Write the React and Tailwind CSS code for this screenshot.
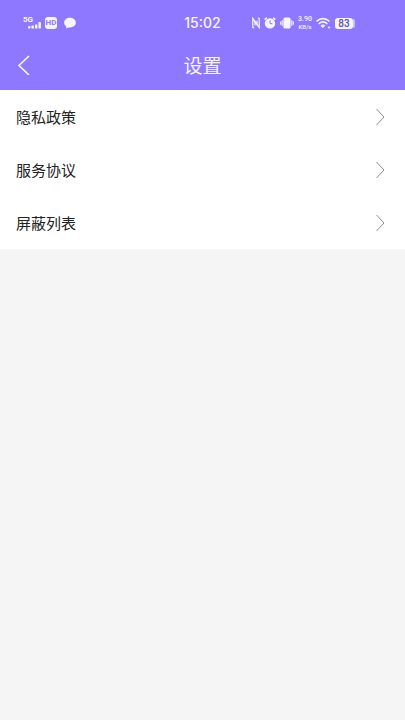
import React from 'react';

const menuItems = [
  { id: 'privacy', label: '隐私政策' },
  { id: 'terms', label: '服务协议' },
  { id: 'blocked', label: '屏蔽列表' },
];

const SignalIcon = () => (
  <div className="relative w-[18px] h-3">
    <span className="absolute left-0 -top-px text-[8px] leading-[8px] font-bold">5G</span>
    <svg className="w-full h-full" viewBox="0 0 18 12" fill="currentColor" aria-hidden="true">
      <rect x="5" y="9" width="2.4" height="2.6" rx="0.4" />
      <rect x="8.5" y="8.4" width="2.4" height="3.2" rx="0.4" />
      <rect x="12" y="7.4" width="2.4" height="4.2" rx="0.4" />
      <rect x="15.5" y="5" width="2.4" height="6.6" rx="0.4" />
    </svg>
  </div>
);

const ChatIcon = () => (
  <svg width="12" height="12" viewBox="0 0 12 12" fill="currentColor" aria-hidden="true">
    <path d="M6 .7C2.700.7.1 2.800.1 5.600c0 1.600.9 3 2.300 3.900L1.900 11.600l2.800-1.200c.4.1.9.1 1.300.1 3.300 0 5.900-2.200 5.900-4.900S9.300.7 6 .7z" />
  </svg>
);

const NfcIcon = () => (
  <svg width="8" height="12" viewBox="0 0 8 12" fill="none" stroke="currentColor" strokeWidth="1.2" aria-hidden="true">
    <path d="M2.200 11L.8 10.600V1.400L5 7.600V3.600" />
    <path d="M5.800 1L7.200 1.400V10.600L3 4.400V8.400" />
  </svg>
);

const AlarmIcon = () => (
  <svg width="12" height="12" viewBox="0 0 12 12" aria-hidden="true">
    <path d="M1.200 2.200L2.400 1.200M10.800 2.200L9.600 1.200" stroke="currentColor" strokeWidth="1.600" strokeLinecap="round" />
    <circle cx="6" cy="6.400" r="5.200" fill="currentColor" />
    <path d="M6 3.800V6.700H8" fill="none" stroke="#8e78ff" strokeWidth="1" strokeLinecap="round" />
  </svg>
);

const VibrateIcon = () => (
  <svg width="14" height="12" viewBox="0 0 14 12" aria-hidden="true">
    <rect x="3.400" y="0.500" width="7.200" height="11" rx="1.600" fill="currentColor" />
    <path d="M2.200 3.500V8.500M11.800 3.500V8.500M.7 4.800V7.200M13.300 4.800V7.200" stroke="currentColor" strokeWidth="1.100" strokeLinecap="round" />
  </svg>
);

const WifiIcon = () => (
  <svg width="15" height="12" viewBox="0 0 15 12" fill="none" stroke="currentColor" strokeWidth="1.700" strokeLinecap="round" aria-hidden="true">
    <path d="M1.100 4C4.300.8 9.700.8 12.900 4" />
    <path d="M3.200 6.500C5.300 4.400 8.700 4.400 10.800 6.500" />
    <path d="M5.200 8.600C6.300 7.700 7.700 7.700 8.800 8.600L7 10.400Z" fill="currentColor" strokeWidth="0.900" />
    <circle cx="13" cy="10.400" r="1" fill="currentColor" stroke="none" />
  </svg>
);

const Battery = ({ level }) => (
  <div className="flex items-center">
    <span className="w-[18px] h-[11px] rounded-[3px] bg-[#f7f5ff] text-[#5c519c] text-[10px] leading-[11px] font-medium text-center">
      {level}
    </span>
    <span className="w-0.5 h-[9px] rounded-r-sm bg-[#c9bfff]" />
  </div>
);

const StatusBar = () => (
  <div className="h-10 pt-1.5 grid grid-cols-[1fr_auto_1fr] items-center font-['Roboto',sans-serif]">
    <div className="flex items-center pl-[23px]">
      <SignalIcon />
      <span className="ml-1 w-3 h-3 rounded-[3px] bg-[#f7f5ff] text-[#8e78ff] text-[8px] leading-3 font-bold text-center">HD</span>
      <span className="ml-[7px]"><ChatIcon /></span>
    </div>
    <span className="text-[14px] leading-5 font-medium font-['Inter',sans-serif]">15:02</span>
    <div className="flex items-center justify-end gap-1 pr-[50px]">
      <NfcIcon />
      <AlarmIcon />
      <VibrateIcon />
      <div className="flex flex-col items-center text-[7px] leading-[7px] font-medium">
        <span>3.90</span>
        <span className="text-[6px]">KB/s</span>
      </div>
      <WifiIcon />
      <Battery level={83} />
    </div>
  </div>
);

const NavBar = ({ title }) => (
  <div className="h-[50px] grid grid-cols-[1fr_auto_1fr] items-center">
    <button type="button" aria-label="返回" className="justify-self-start pl-[17px] pr-4 py-3 cursor-pointer">
      <svg width="14" height="20" viewBox="0 0 14 20" fill="none" stroke="currentColor" strokeWidth="1.600" aria-hidden="true">
        <path d="M12 1L2 10.500L12 20" />
      </svg>
    </button>
    <h1 className="text-[19px] leading-6">{title}</h1>
  </div>
);

const MenuRow = ({ label }) => (
  <li>
    <button type="button" className="w-full h-[53px] pl-4 pr-5 flex items-center justify-between cursor-pointer">
      <span className="text-[15px] leading-5 text-[#222222]">{label}</span>
      <svg width="9" height="18" viewBox="0 0 9 18" fill="none" stroke="#8c8c8c" strokeWidth="1" aria-hidden="true">
        <path d="M0.500 1L8 9L0.500 17" />
      </svg>
    </button>
  </li>
);

export default function App() {
  return (
    <div className="min-h-screen bg-[#f5f5f5] font-['Noto_Sans_CJK_SC',sans-serif]">
      <header className="bg-[#8e78ff] text-[#f7f5ff]">
        <StatusBar />
        <NavBar title="设置" />
      </header>
      <main>
        <ul className="bg-white">
          {menuItems.map((item) => (
            <MenuRow key={item.id} label={item.label} />
          ))}
        </ul>
      </main>
    </div>
  );
}
